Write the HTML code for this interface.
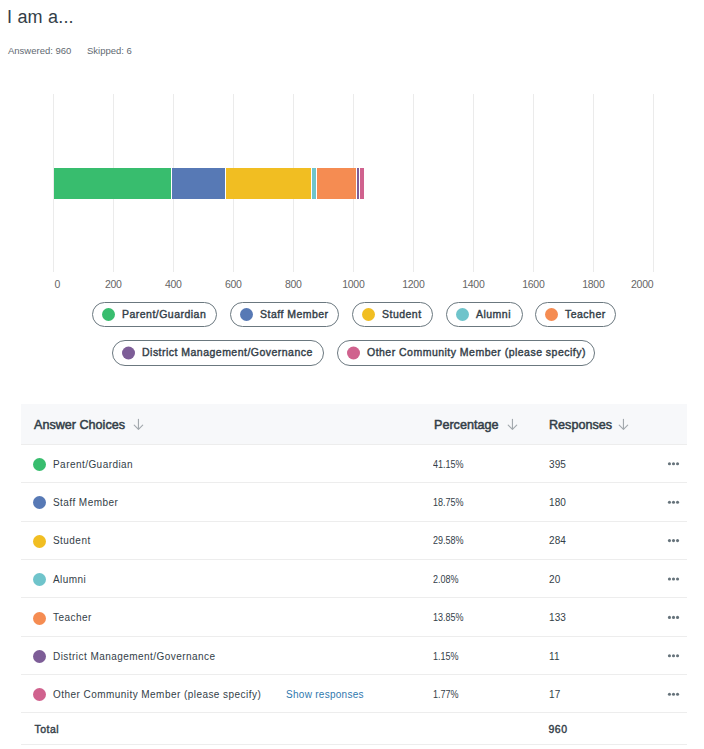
<!DOCTYPE html>
<html><head><meta charset="utf-8"><style>
html,body{margin:0;padding:0;background:#fff;}
body{width:704px;height:749px;overflow:hidden;position:relative;font-family:"Liberation Sans", sans-serif;color:#333e48;}
.a{position:absolute;white-space:nowrap;}
.g{position:absolute;top:94px;height:178px;width:1px;background:#ebebeb;}
.seg{position:absolute;top:168px;height:31px;}
.xl{position:absolute;top:277px;font-size:10.5px;line-height:14px;color:#666;width:40px;text-align:center;letter-spacing:-0.3px;text-indent:-0.3px;}
.pill{position:absolute;height:23px;border:1px solid #6b787f;border-radius:13px;box-sizing:content-box;}
.pill .d{position:absolute;left:9px;top:5px;width:13px;height:13px;border-radius:50%;}
.t{position:absolute;font-size:10.5px;line-height:14px;color:#333e48;white-space:nowrap;-webkit-text-stroke:0.4px #333e48;letter-spacing:0.48px;}
.rowb{position:absolute;left:21px;width:666px;height:1px;background:#ededed;}
.dot{position:absolute;width:13px;height:13px;border-radius:50%;left:33px;}
.rt{position:absolute;font-size:11px;line-height:14px;white-space:nowrap;color:#333e48;}
.more{position:absolute;left:668px;width:3px;height:3px;border-radius:50%;background:#6b787f;box-shadow:4px 0 0 #6b787f,8px 0 0 #6b787f;}
.hd{position:absolute;top:415.5px;font-size:12.6px;line-height:18px;white-space:nowrap;color:#333e48;letter-spacing:0px;-webkit-text-stroke:0.5px #333e48;}
.arr{position:absolute;top:417px;width:14px;height:14px;}
</style></head><body>
<div class="a" style="left:7px;top:6px;font-size:18px;line-height:22px;color:#333e48;letter-spacing:0.2px;">I am a...</div>
<div class="a" style="left:8px;top:45px;font-size:9.5px;line-height:12px;color:#5f6a72;">Answered: 960</div>
<div class="a" style="left:87px;top:45px;font-size:9.5px;line-height:12px;color:#5f6a72;">Skipped: 6</div>

<div class="g" style="left:53px"></div>
<div class="g" style="left:113px"></div>
<div class="g" style="left:173px"></div>
<div class="g" style="left:233px"></div>
<div class="g" style="left:293px"></div>
<div class="g" style="left:353px"></div>
<div class="g" style="left:413px"></div>
<div class="g" style="left:473px"></div>
<div class="g" style="left:533px"></div>
<div class="g" style="left:593px"></div>
<div class="g" style="left:653px"></div>
<div class="seg" style="left:54px;width:117px;background:#38bd6e"></div>
<div class="seg" style="left:172px;width:53px;background:#5779b5"></div>
<div class="seg" style="left:226px;width:85px;background:#f1be22"></div>
<div class="seg" style="left:312px;width:4px;background:#6fc4cb"></div>
<div class="seg" style="left:317px;width:39px;background:#f58c52"></div>
<div class="seg" style="left:357px;width:2px;background:#7d5d97"></div>
<div class="seg" style="left:360px;width:4px;background:#d0628e"></div>
<div class="xl" style="left:37.4px">0</div>
<div class="xl" style="left:93.5px">200</div>
<div class="xl" style="left:153.5px">400</div>
<div class="xl" style="left:213.5px">600</div>
<div class="xl" style="left:273.5px">800</div>
<div class="xl" style="left:333.5px">1000</div>
<div class="xl" style="left:393.5px">1200</div>
<div class="xl" style="left:453.5px">1400</div>
<div class="xl" style="left:513.5px">1600</div>
<div class="xl" style="left:573.5px">1800</div>
<div class="xl" style="left:622.3px">2000</div>
<div class="t" style="left:122px;top:307px">Parent/Guardian</div>
<div class="t" style="left:260px;top:307px">Staff Member</div>
<div class="t" style="left:382px;top:307px">Student</div>
<div class="t" style="left:476px;top:307px">Alumni</div>
<div class="t" style="left:565px;top:307px">Teacher</div>
<div class="t" style="left:142px;top:345px">District Management/Governance</div>
<div class="t" style="left:367px;top:345px">Other Community Member (please specify)</div>
<svg class="a" style="left:0;top:290px" width="704" height="85"><rect x="92.5" y="12.5" width="124" height="24.00" rx="12.00" fill="none" stroke="#6b787f" stroke-width="1"/><circle cx="108.5" cy="24.50" r="6.5" fill="#38bd6e"/><rect x="230.5" y="12.5" width="108" height="24.00" rx="12.00" fill="none" stroke="#6b787f" stroke-width="1"/><circle cx="246.5" cy="24.50" r="6.5" fill="#5779b5"/><rect x="352.5" y="12.5" width="80" height="24.00" rx="12.00" fill="none" stroke="#6b787f" stroke-width="1"/><circle cx="368.5" cy="24.50" r="6.5" fill="#f1be22"/><rect x="446.5" y="12.5" width="76" height="24.00" rx="12.00" fill="none" stroke="#6b787f" stroke-width="1"/><circle cx="462.5" cy="24.50" r="6.5" fill="#6fc4cb"/><rect x="535.5" y="12.5" width="80" height="24.00" rx="12.00" fill="none" stroke="#6b787f" stroke-width="1"/><circle cx="551.5" cy="24.50" r="6.5" fill="#f58c52"/><rect x="112.5" y="50.5" width="211" height="25.00" rx="12.50" fill="none" stroke="#6b787f" stroke-width="1"/><circle cx="128.5" cy="63.00" r="6.5" fill="#7d5d97"/><rect x="337.5" y="50.5" width="257" height="25.00" rx="12.50" fill="none" stroke="#6b787f" stroke-width="1"/><circle cx="353.5" cy="63.00" r="6.5" fill="#d0628e"/></svg>
<div class="a" style="left:21px;top:404px;width:666px;height:40px;background:#f7f8fa;"></div>
<div class="hd" style="left:34px">Answer Choices</div><div class="arr" style="left:132px"><svg width="14" height="14" viewBox="0 0 14 14" style="display:block"><path d="M6.45 2.3V12.2M2.2 8.1L6.45 12.3L10.7 8.1" fill="none" stroke="#a3a9ae" stroke-width="1.15" stroke-linecap="round" stroke-linejoin="round"/></svg></div>
<div class="hd" style="left:434px">Percentage</div><div class="arr" style="left:506px"><svg width="14" height="14" viewBox="0 0 14 14" style="display:block"><path d="M6.45 2.3V12.2M2.2 8.1L6.45 12.3L10.7 8.1" fill="none" stroke="#a3a9ae" stroke-width="1.15" stroke-linecap="round" stroke-linejoin="round"/></svg></div>
<div class="hd" style="left:549px">Responses</div><div class="arr" style="left:617px"><svg width="14" height="14" viewBox="0 0 14 14" style="display:block"><path d="M6.45 2.3V12.2M2.2 8.1L6.45 12.3L10.7 8.1" fill="none" stroke="#a3a9ae" stroke-width="1.15" stroke-linecap="round" stroke-linejoin="round"/></svg></div>
<div class="rowb" style="top:444px"></div>
<div class="rowb" style="top:482px"></div>
<div class="rowb" style="top:521px"></div>
<div class="rowb" style="top:559px"></div>
<div class="rowb" style="top:597px"></div>
<div class="rowb" style="top:636px"></div>
<div class="rowb" style="top:674px"></div>
<div class="rowb" style="top:712px"></div>
<div class="rowb" style="top:744px"></div>
<div class="dot" style="top:458.0px;background:#38bd6e"></div>
<div class="rt" style="left:53px;top:457.5px;font-size:10px;letter-spacing:0.45px">Parent/Guardian</div>
<div class="rt" style="left:433px;top:457.5px;font-size:10px;transform:scaleX(0.9);transform-origin:0 0">41.15%</div>
<div class="rt" style="left:549px;top:457.5px;font-size:10px;letter-spacing:0.1px">395</div>
<svg class="a" style="left:660px;top:458px" width="24" height="10"><g fill="#66737b"><circle cx="9.45" cy="5.80" r="1.55"/><circle cx="13.5" cy="5.80" r="1.55"/><circle cx="17.55" cy="5.80" r="1.55"/></g></svg>
<div class="dot" style="top:496.4px;background:#5779b5"></div>
<div class="rt" style="left:53px;top:495.5px;font-size:10px;letter-spacing:0.45px">Staff Member</div>
<div class="rt" style="left:433px;top:495.5px;font-size:10px;transform:scaleX(0.9);transform-origin:0 0">18.75%</div>
<div class="rt" style="left:549px;top:495.5px;font-size:10px;letter-spacing:0.1px">180</div>
<svg class="a" style="left:660px;top:497px" width="24" height="10"><g fill="#66737b"><circle cx="9.45" cy="5.20" r="1.55"/><circle cx="13.5" cy="5.20" r="1.55"/><circle cx="17.55" cy="5.20" r="1.55"/></g></svg>
<div class="dot" style="top:534.8px;background:#f1be22"></div>
<div class="rt" style="left:53px;top:533.5px;font-size:10px;letter-spacing:0.45px">Student</div>
<div class="rt" style="left:433px;top:533.5px;font-size:10px;transform:scaleX(0.9);transform-origin:0 0">29.58%</div>
<div class="rt" style="left:549px;top:533.5px;font-size:10px;letter-spacing:0.1px">284</div>
<svg class="a" style="left:660px;top:535px" width="24" height="10"><g fill="#66737b"><circle cx="9.45" cy="5.60" r="1.55"/><circle cx="13.5" cy="5.60" r="1.55"/><circle cx="17.55" cy="5.60" r="1.55"/></g></svg>
<div class="dot" style="top:573.2px;background:#6fc4cb"></div>
<div class="rt" style="left:53px;top:572.5px;font-size:10px;letter-spacing:0.45px">Alumni</div>
<div class="rt" style="left:433px;top:572.5px;font-size:10px;transform:scaleX(0.9);transform-origin:0 0">2.08%</div>
<div class="rt" style="left:549px;top:572.5px;font-size:10px;letter-spacing:0.1px">20</div>
<svg class="a" style="left:660px;top:574px" width="24" height="10"><g fill="#66737b"><circle cx="9.45" cy="5.00" r="1.55"/><circle cx="13.5" cy="5.00" r="1.55"/><circle cx="17.55" cy="5.00" r="1.55"/></g></svg>
<div class="dot" style="top:611.6px;background:#f58c52"></div>
<div class="rt" style="left:53px;top:610.5px;font-size:10px;letter-spacing:0.45px">Teacher</div>
<div class="rt" style="left:433px;top:610.5px;font-size:10px;transform:scaleX(0.9);transform-origin:0 0">13.85%</div>
<div class="rt" style="left:549px;top:610.5px;font-size:10px;letter-spacing:0.1px">133</div>
<svg class="a" style="left:660px;top:612px" width="24" height="10"><g fill="#66737b"><circle cx="9.45" cy="5.40" r="1.55"/><circle cx="13.5" cy="5.40" r="1.55"/><circle cx="17.55" cy="5.40" r="1.55"/></g></svg>
<div class="dot" style="top:650.0px;background:#7d5d97"></div>
<div class="rt" style="left:53px;top:649.5px;font-size:10px;letter-spacing:0.45px">District Management/Governance</div>
<div class="rt" style="left:433px;top:649.5px;font-size:10px;transform:scaleX(0.9);transform-origin:0 0">1.15%</div>
<div class="rt" style="left:549px;top:649.5px;font-size:10px;letter-spacing:0.1px">11</div>
<svg class="a" style="left:660px;top:650px" width="24" height="10"><g fill="#66737b"><circle cx="9.45" cy="5.80" r="1.55"/><circle cx="13.5" cy="5.80" r="1.55"/><circle cx="17.55" cy="5.80" r="1.55"/></g></svg>
<div class="dot" style="top:688.4px;background:#d0628e"></div>
<div class="rt" style="left:53px;top:687.5px;font-size:10px;letter-spacing:0.45px">Other Community Member (please specify)</div>
<div class="rt" style="left:286px;top:687.5px;color:#2f78ae;font-size:10px;letter-spacing:0.28px">Show responses</div>
<div class="rt" style="left:433px;top:687.5px;font-size:10px;transform:scaleX(0.9);transform-origin:0 0">1.77%</div>
<div class="rt" style="left:549px;top:687.5px;font-size:10px;letter-spacing:0.1px">17</div>
<svg class="a" style="left:660px;top:689px" width="24" height="10"><g fill="#66737b"><circle cx="9.45" cy="5.20" r="1.55"/><circle cx="13.5" cy="5.20" r="1.55"/><circle cx="17.55" cy="5.20" r="1.55"/></g></svg>
<div class="rt" style="left:34.5px;top:721.8px;font-size:10.5px;letter-spacing:0.5px;-webkit-text-stroke:0.4px #333e48">Total</div>
<div class="rt" style="left:548.5px;top:721.8px;font-size:10.5px;letter-spacing:0.5px;-webkit-text-stroke:0.4px #333e48">960</div>
</body></html>
